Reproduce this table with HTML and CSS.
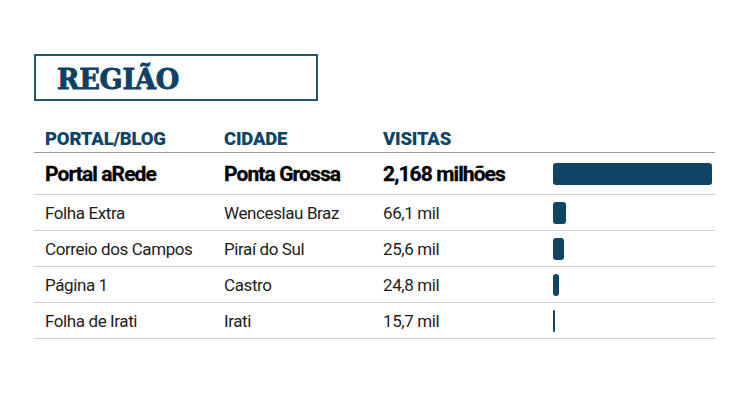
FILE: index.html
```html
<!DOCTYPE html>
<html lang="pt">
<head>
<meta charset="utf-8">
<link rel="stylesheet" href="styles.css">
</head>
<body>
<div class="page">
  <div class="title-box"><h1 class="title">REGIÃO</h1></div>
  <div class="table">
    <div class="row head">
      <div>PORTAL/BLOG</div><div>CIDADE</div><div>VISITAS</div><div></div>
    </div>
    <div class="row main">
      <div>Portal aRede</div><div>Ponta Grossa</div><div>2,168 milhões</div>
      <div class="barcell"><span class="bar" style="width:159px"></span></div>
    </div>
    <div class="row">
      <div>Folha Extra</div><div>Wenceslau Braz</div><div>66,1 mil</div>
      <div class="barcell"><span class="bar" style="width:13px"></span></div>
    </div>
    <div class="row">
      <div>Correio dos Campos</div><div>Piraí do Sul</div><div>25,6 mil</div>
      <div class="barcell"><span class="bar" style="width:11px"></span></div>
    </div>
    <div class="row">
      <div>Página 1</div><div>Castro</div><div>24,8 mil</div>
      <div class="barcell"><span class="bar" style="width:6px"></span></div>
    </div>
    <div class="row">
      <div>Folha de Irati</div><div>Irati</div><div>15,7 mil</div>
      <div class="barcell"><span class="bar thin" style="width:2px"></span></div>
    </div>
  </div>
</div>
</body>
</html>
```
FILE: styles.css
```css
* { box-sizing: border-box; }
html, body { margin: 0; padding: 0; background: #fff; }
body { width: 750px; height: 400px; overflow: hidden; }
.page { padding: 54px 0 0 34px; }
.title-box {
  width: 284px;
  height: 47px;
  border: 2px solid #24546f;
  padding-left: 21px;
  display: flex;
  align-items: center;
}
.title {
  margin: 0;
  font-family: "DejaVu Serif", "Liberation Serif", serif;
  font-weight: 700;
  font-size: 27px;
  letter-spacing: -0.2px;
  color: #0f4262;
  -webkit-text-stroke: 0.9px #0f4262;
  line-height: 1;
  padding-top: 3px;
}
.table { width: 681px; margin-top: 25px; }
.row {
  display: grid;
  grid-template-columns: 179px 159px 170px 1fr;
  padding-left: 11px;
  align-items: center;
  height: 36px;
  border-bottom: 1.5px solid #cfcfcf;
  font-family: "Roboto", "Open Sans", sans-serif;
  font-size: 17px;
  letter-spacing: -0.4px;
  color: #1d1d1d;
}
.row.head {
  height: 27px;
  align-items: start;
  padding-top: 2px;
  border-bottom: 1.5px solid #9a9a9a;
  font-weight: 900;
  font-size: 18.5px;
  letter-spacing: -0.2px;
  color: #0f4464;
  line-height: 22px;
}
.row.main {
  height: 42px;
  font-weight: 700;
  font-size: 21px;
  letter-spacing: -0.9px;
  color: #000;
  -webkit-text-stroke: 0.3px #000;
}
.barcell { display: flex; align-items: center; }
.bar {
  display: block;
  height: 22px;
  background: #0f4464;
  border-radius: 3px;
}
.bar.thin { border-radius: 1px; }
```
